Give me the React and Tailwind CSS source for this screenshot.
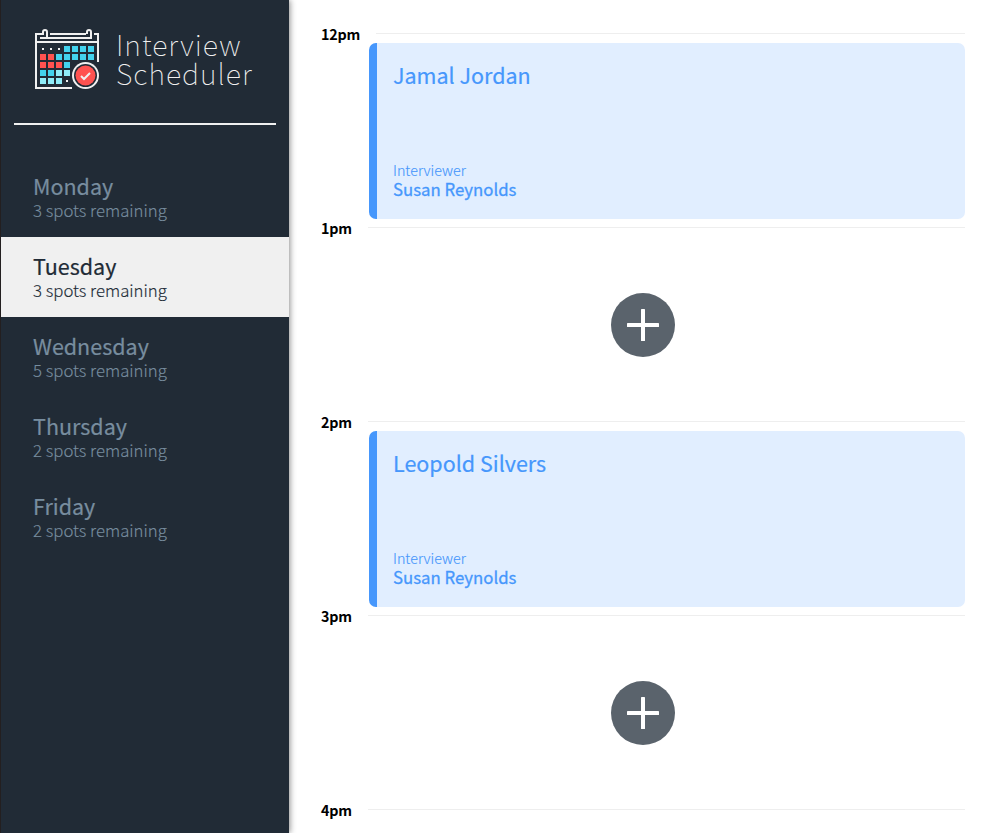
const FONT = "font-['Noto_Sans_CJK_SC','Noto_Sans',sans-serif]";

const days = [
  { name: "Monday", spots: 3 },
  { name: "Tuesday", spots: 3, selected: true },
  { name: "Wednesday", spots: 5 },
  { name: "Thursday", spots: 2 },
  { name: "Friday", spots: 2 },
];

const slots = [
  { time: "12pm", student: "Jamal Jordan", interviewer: "Susan Reynolds" },
  { time: "1pm" },
  { time: "2pm", student: "Leopold Silvers", interviewer: "Susan Reynolds" },
  { time: "3pm" },
  { time: "4pm" },
];

const CYAN = "#43d3ee";
const PALE = "#8fecf8";
const RED = "#ff5250";

// One entry per calendar row: column index and colour of every filled day.
const calendar = [
  [[3, CYAN], [4, CYAN], [5, CYAN], [6, CYAN]],
  [[0, RED], [1, RED], [2, CYAN], [3, CYAN], [4, CYAN], [5, CYAN], [6, CYAN]],
  [[0, RED], [1, RED], [2, RED], [3, CYAN]],
  [[0, CYAN], [1, CYAN], [2, PALE], [3, PALE]],
  [[0, PALE], [1, PALE], [2, PALE]],
];

function CalendarIcon() {
  return (
    <svg width="66" height="62" viewBox="0 0 66 62" fill="none" className="shrink-0">
      <path d="M38 60H2V6H10M16 6H52M60 6H64V34M2 14H64" stroke="#f0f0f0" strokeWidth="2" />
      <path d="M6 10H58M9 6V4A2 2 0 0 1 13 4V10M53 6V4A2 2 0 0 1 57 4V10" stroke="#f0f0f0" strokeWidth="2" />
      {calendar.map((row, r) =>
        row.map(([c, color]) => (
          <rect key={`${r}-${c}`} x={6 + c * 8} y={18 + r * 8} width="6" height="6" fill={color} />
        ))
      )}
      <path d="M8 20h2v2h-2zM16 20h2v2h-2zM24 20h2v2h-2zM32 52h2v2h-2z" fill="#f0f0f0" />
      <circle cx="51.5" cy="47.5" r="13.5" fill="#f0f0f0" />
      <circle cx="51.5" cy="47.5" r="11.5" fill="#212b36" />
      <circle cx="51.5" cy="47.5" r="10" fill={RED} />
      <path d="M47 48L50 51L56 45" stroke="#f0f0f0" strokeWidth="2" />
    </svg>
  );
}

function Day({ name, spots, selected }) {
  return (
    <li className={`flex h-20 flex-col pt-[17px] pl-8 ${selected ? "bg-[#f0f0f0] text-[#212b36]" : "text-[#788d9f]"}`}>
      <h2 className="text-[21.5px] leading-6 font-normal [-webkit-text-stroke:0.2px]">{name}</h2>
      <h3 className="text-[16.77px] leading-6 font-light [-webkit-text-stroke:0.15px]">{spots} spots remaining</h3>
    </li>
  );
}

function Slot({ time, student, interviewer }) {
  return (
    <article className="h-[194px]">
      <header className="flex h-6 justify-between">
        <h4 className="-mt-px text-[14.3px] leading-6 font-bold tracking-[-0.2px] text-black">{time}</h4>
        <div className={`mt-[10px] h-px bg-[#eee] ${time === "12pm" ? "w-[589px]" : "w-[597px]"}`} />
      </header>
      {student ? (
        <div className="-mt-1 ml-12 flex h-44 flex-col justify-between rounded-[7px] border-l-8 border-[#4697fc] bg-[#e1eeff] px-4 pt-5 pb-5 text-[#4697fc]">
          <h2 className="text-[21.5px] leading-6 [-webkit-text-stroke:0.2px]">{student}</h2>
          <section>
            <h4 className="mb-px text-[14.3px] leading-[19px] font-light [-webkit-text-stroke:0.15px]">Interviewer</h4>
            <h3 className="text-[16.77px] leading-[19px] [-webkit-text-stroke:0.3px]">{interviewer}</h3>
          </section>
        </div>
      ) : (
        <div className="flex h-[170px] items-start justify-center pt-[52px]">
          <svg width="64" height="64" viewBox="0 0 64 64">
            <circle cx="32" cy="32" r="32" fill="#5a636c" />
            <rect x="16" y="30" width="32" height="4" rx="0.6" fill="#fff" />
            <rect x="30" y="16" width="4" height="32" rx="0.6" fill="#fff" />
          </svg>
        </div>
      )}
    </article>
  );
}

export default function App() {
  return (
    <main className={`flex h-[833px] w-[995px] overflow-hidden bg-white ${FONT}`}>
      <aside className="z-10 h-full w-[289px] shrink-0 border-l border-[#231f20] bg-[#212b36] shadow-[1px_0_6px_rgba(0,0,0,0.45)]">
        <div className="flex h-[123px] gap-4 pt-7 pl-[33px]">
          <CalendarIcon />
          <h1 className="pt-px text-[28.67px] leading-[29px] font-thin tracking-[1px] text-[#f0f0f0]">
            Interview
            <br />
            Scheduler
          </h1>
        </div>
        <hr className="mr-[13px] ml-[13px] h-0.5 border-0 bg-[#f0f0f0]" />
        <ul className="mt-8">
          {days.map((day) => (
            <Day key={day.name} {...day} />
          ))}
        </ul>
      </aside>
      <section className="ml-8 w-[644px] pt-[23px]">
        {slots.map((slot) => (
          <Slot key={slot.time} {...slot} />
        ))}
      </section>
    </main>
  );
}
